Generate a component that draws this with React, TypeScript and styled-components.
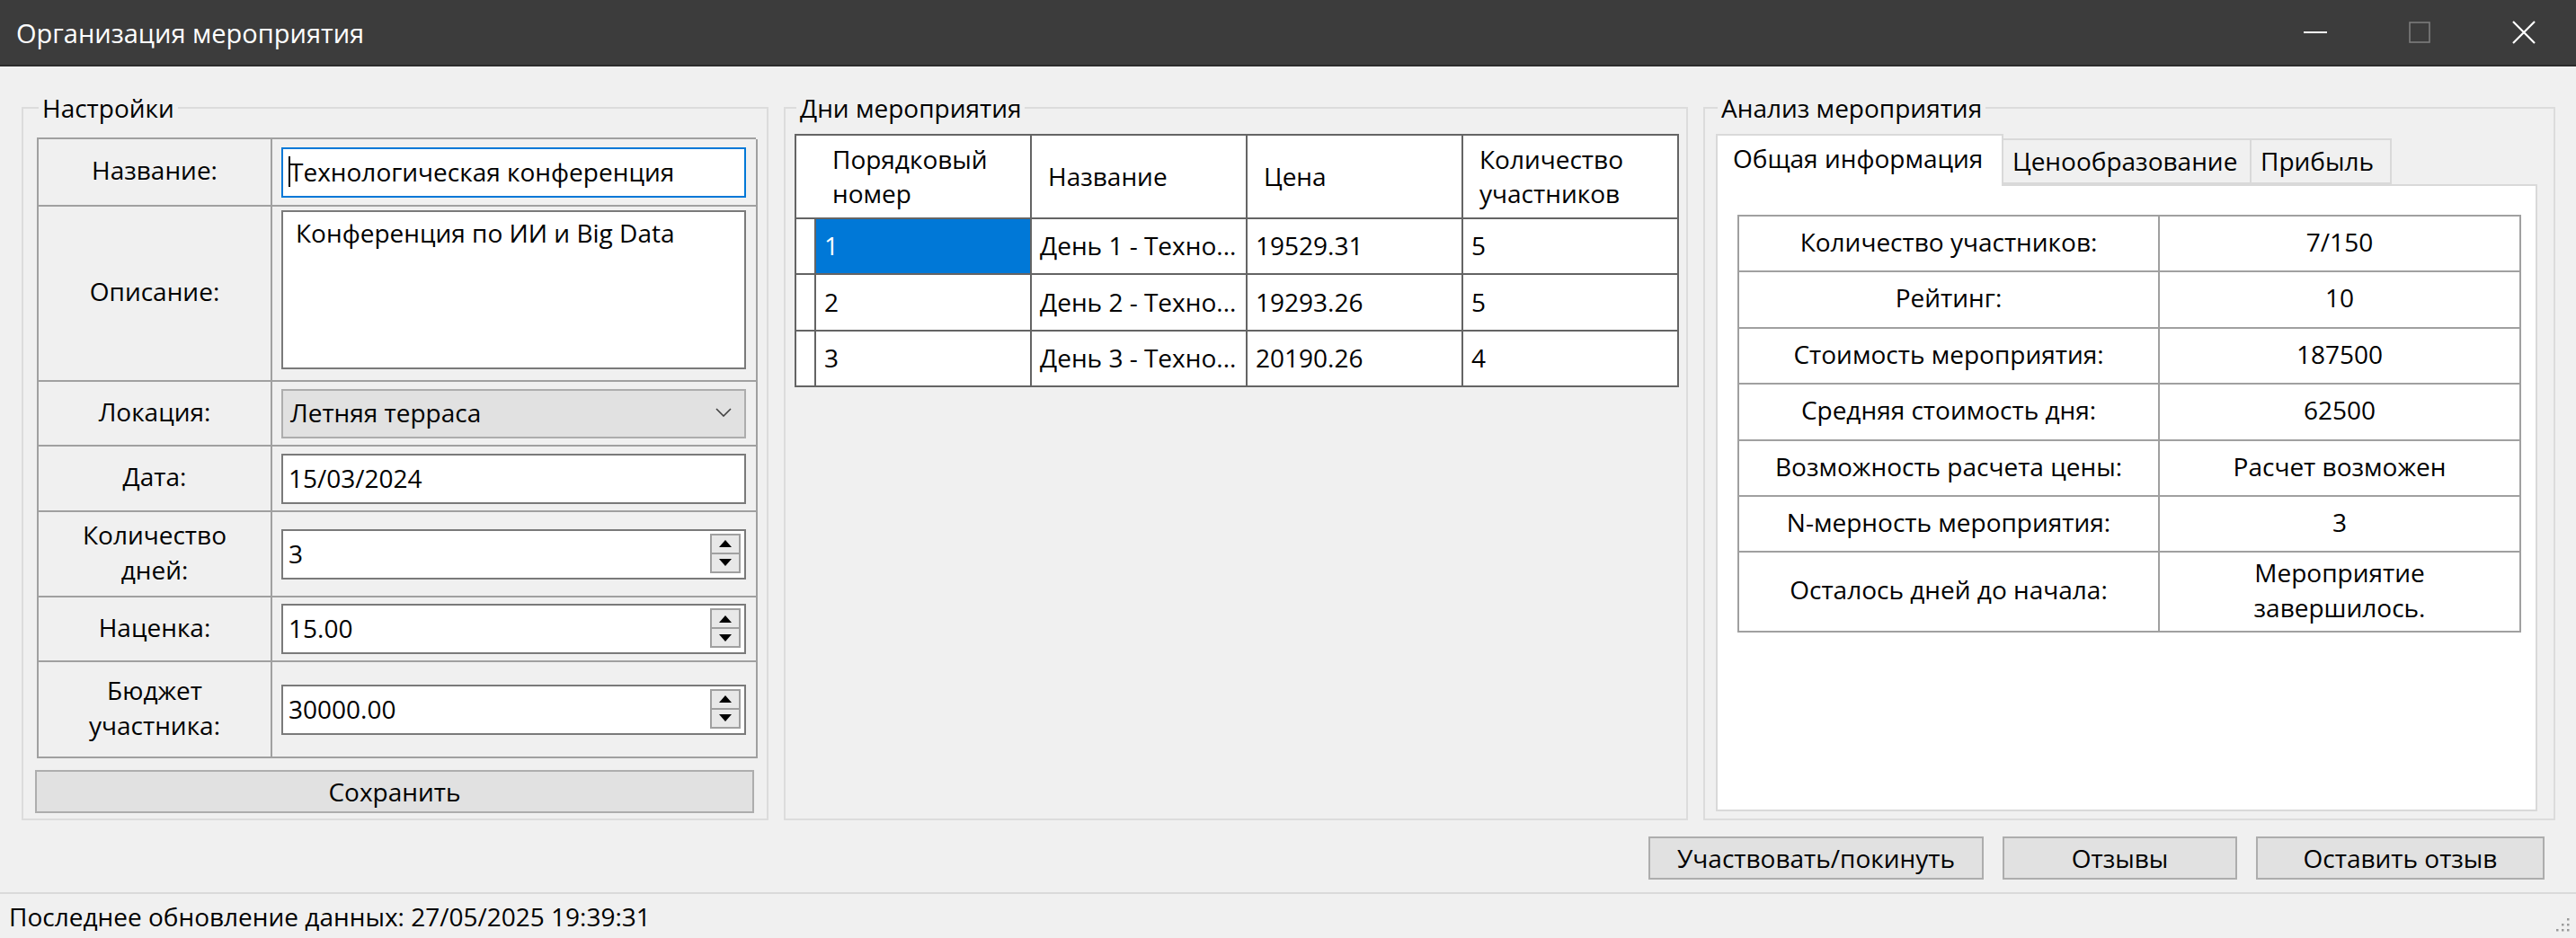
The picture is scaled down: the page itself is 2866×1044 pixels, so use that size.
import React from 'react';
import styled, { createGlobalStyle } from 'styled-components';

const GlobalStyle = createGlobalStyle`
  html, body { margin: 0; padding: 0; }
  body {
    background: #f0f0f0;
    font-family: 'Open Sans', 'Noto Sans', 'Liberation Sans', sans-serif;
    font-size: 28px;
    color: #000;
  }
  * { box-sizing: border-box; }
`;

const Window = styled.div`
	width: 2866px;
	height: 1044px;
	display: flex;
	flex-direction: column;
	background: #f0f0f0;
	overflow: hidden;
`;

const TitleBar = styled.header`
	height: 74px;
	flex: none;
	display: flex;
	align-items: center;
	background: #3c3c3c;
	border-bottom: 2px solid #2b2b2b;
	color: #fff;
	padding-left: 18px;
`;

const TitleText = styled.div`
	flex: 1;
	font-size: 29px;
`;

const WindowControls = styled.div`
	display: flex;
	height: 100%;
`;

const ControlButton = styled.div`
	width: 116px;
	display: flex;
	align-items: center;
	justify-content: center;
`;

const Main = styled.main`
	flex: 1;
	display: flex;
	flex-direction: column;
	padding: 28px 23px 0 24px;
`;

const Groups = styled.div`
	display: flex;
	gap: 17px;
	height: 811px;
`;

const GroupBox = styled.fieldset<{ $width: number; $pad: string }>`
	margin: 0;
	min-width: 0;
	width: ${(p) => p.$width}px;
	height: 100%;
	border: 2px solid #dcdcdc;
	padding: ${(p) => p.$pad};
	display: flex;
	flex-direction: column;
`;

const Legend = styled.legend`
	padding: 0 4px;
	margin-left: 2px;
	line-height: 36px;
`;

/* ---------- settings ---------- */

const FormGrid = styled.div`
	display: grid;
	width: 800px;
	grid-template-columns: 260px 540px;
	grid-template-rows: 75px 195px 72px 73px 95px 72px 107px;
	border-top: 2px solid #a0a0a0;
	border-left: 2px solid #a0a0a0;
`;

const LabelCell = styled.div`
	display: flex;
	align-items: center;
	justify-content: center;
	text-align: center;
	line-height: 1.36;
	padding-bottom: 4px;
	border-right: 2px solid #a0a0a0;
	border-bottom: 2px solid #a0a0a0;
`;

const ValueCell = styled.div<{ $top?: boolean }>`
	display: flex;
	align-items: ${(p) => (p.$top ? 'flex-start' : 'center')};
	padding: ${(p) => (p.$top ? '4px' : '0')} 11px 0 10px;
	border-right: 2px solid #a0a0a0;
	border-bottom: 2px solid #a0a0a0;
`;

const TextBox = styled.div<{ $focused?: boolean }>`
	flex: 1;
	height: 56px;
	display: flex;
	align-items: center;
	padding: 0 0 2px 6px;
	background: #fff;
	border: 2px solid ${(p) => (p.$focused ? '#0078d7' : '#7a7a7a')};
	white-space: nowrap;
`;

const Caret = styled.span`
	width: 2px;
	height: 34px;
	background: #000;
	margin-right: -1px;
`;

const TextArea = styled.div`
	flex: 1;
	height: 177px;
	padding: 5px 14px;
	background: #fff;
	border: 2px solid #7a7a7a;
	line-height: 1.35;
`;

const ComboBox = styled.div`
	flex: 1;
	height: 55px;
	display: flex;
	align-items: center;
	justify-content: space-between;
	padding: 0 14px 2px 8px;
	background: #e1e1e1;
	border: 2px solid #adadad;
`;

const Spinner = styled.div`
	margin-left: auto;
	margin-right: 4px;
	width: 34px;
	height: 44px;
	display: flex;
	flex-direction: column;
	border: 2px solid #a0a0a0;
	background: #e8e8e8;
`;

const SpinHalf = styled.div<{ $top?: boolean }>`
	flex: 1;
	display: flex;
	align-items: center;
	justify-content: center;
	border-bottom: ${(p) => (p.$top ? '2px solid #a0a0a0' : 'none')};
`;

const PushButton = styled.div<{ $width: number }>`
	width: ${(p) => p.$width}px;
	height: 48px;
	display: flex;
	align-items: center;
	justify-content: center;
	background: #e1e1e1;
	border: 2px solid #adadad;
`;

const SaveRow = styled.div`
	margin-top: 13px;
	margin-left: -2px;
`;

/* ---------- days grid ---------- */

const DaysGrid = styled.div`
	display: grid;
	width: fit-content;
	grid-template-columns: 22px repeat(4, 240px);
	grid-template-rows: 93px 62px 63px 62px;
	border-top: 2px solid #646464;
	border-left: 2px solid #646464;
	background: #fff;
`;

const GridCell = styled.div<{ $head?: boolean; $selected?: boolean }>`
	display: flex;
	align-items: center;
	padding: 0 6px 0 ${(p) => (p.$head ? 18 : 9)}px;
	line-height: 1.34;
	overflow: hidden;
	white-space: ${(p) => (p.$head ? 'normal' : 'nowrap')};
	background: ${(p) => (p.$selected ? '#0078d7' : '#fff')};
	color: ${(p) => (p.$selected ? '#fff' : '#000')};
	border-right: 2px solid #646464;
	border-bottom: 2px solid #646464;
`;

/* ---------- analysis ---------- */

const TabStrip = styled.div`
	display: flex;
	align-items: flex-end;
	height: 56px;
`;

const Tab = styled.div<{ $width: number; $active?: boolean }>`
	width: ${(p) => p.$width}px;
	height: ${(p) => (p.$active ? 58 : 51)}px;
	margin-bottom: ${(p) => (p.$active ? -2 : 0)}px;
	display: flex;
	align-items: center;
	padding-left: ${(p) => (p.$active ? 17 : 10)}px;
	padding-bottom: ${(p) => (p.$active ? 6 : 2)}px;
	white-space: nowrap;
	background: ${(p) => (p.$active ? '#fff' : '#f0f0f0')};
	border: 2px solid #d9d9d9;
	border-bottom: ${(p) => (p.$active ? 'none' : '2px solid #d9d9d9')};
	border-left: ${(p) => (p.$active ? '2px solid #d9d9d9' : 'none')};
	position: relative;
	z-index: ${(p) => (p.$active ? 1 : 0)};
`;

const TabPage = styled.div`
	width: 914px;
	height: 698px;
	background: #fff;
	border: 2px solid #d9d9d9;
	padding: 32px 0 0 22px;
`;

const InfoTable = styled.div`
	display: grid;
	width: 872px;
	grid-template-columns: 468px 402px;
	grid-template-rows: 62px 63px 62px 63px 62px 62px 89px;
	border-top: 2px solid #a0a0a0;
	border-left: 2px solid #a0a0a0;
`;

const InfoCell = styled.div`
	display: flex;
	align-items: center;
	justify-content: center;
	text-align: center;
	line-height: 1.36;
	padding-bottom: 4px;
	border-right: 2px solid #a0a0a0;
	border-bottom: 2px solid #a0a0a0;
`;

/* ---------- bottom ---------- */

const ActionBar = styled.div`
	display: flex;
	justify-content: flex-end;
	gap: 21px;
	margin-top: 18px;
	padding-right: 12px;
`;

const StatusBar = styled.footer`
	height: 51px;
	flex: none;
	display: flex;
	align-items: center;
	justify-content: space-between;
	padding-left: 10px;
	border-top: 2px solid #dadada;
`;

const Grip = styled.svg`
	align-self: flex-end;
	margin: 0 6px 6px 0;
`;

const Chevron = () => (
	<svg width="18" height="10" viewBox="0 0 18 10">
		<polyline points="1,1 9,9 17,1" fill="none" stroke="#404040" strokeWidth="1.6" />
	</svg>
);

const Spin = () => (
	<Spinner>
		<SpinHalf $top>
			<svg width="14" height="8" viewBox="0 0 14 8">
				<polygon points="7,0 14,8 0,8" fill="#000" />
			</svg>
		</SpinHalf>
		<SpinHalf>
			<svg width="14" height="8" viewBox="0 0 14 8">
				<polygon points="0,0 14,0 7,8" fill="#000" />
			</svg>
		</SpinHalf>
	</Spinner>
);

const days = [
	{ n: '1', name: 'День 1 - Техно...', price: '19529.31', count: '5' },
	{ n: '2', name: 'День 2 - Техно...', price: '19293.26', count: '5' },
	{ n: '3', name: 'День 3 - Техно...', price: '20190.26', count: '4' }
];

const info: [string, React.ReactNode][] = [
	['Количество участников:', '7/150'],
	['Рейтинг:', '10'],
	['Стоимость мероприятия:', '187500'],
	['Средняя стоимость дня:', '62500'],
	['Возможность расчета цены:', 'Расчет возможен'],
	['N-мерность мероприятия:', '3'],
	[
		'Осталось дней до начала:',
		<>
			Мероприятие
			<br />
			завершилось.
		</>
	]
];

const tabs = [
	{ label: 'Общая информация', width: 320 },
	{ label: 'Ценообразование', width: 276 },
	{ label: 'Прибыль', width: 156 }
];

export default function App() {
	return (
		<>
			<GlobalStyle />
			<Window>
				<TitleBar>
					<TitleText>Организация мероприятия</TitleText>
					<WindowControls>
						<ControlButton>
							<svg width="26" height="4" viewBox="0 0 26 4">
								<line x1="0" y1="2" x2="26" y2="2" stroke="#fff" strokeWidth="2" />
							</svg>
						</ControlButton>
						<ControlButton>
							<svg width="24" height="24" viewBox="0 0 24 24">
								<rect x="1" y="1" width="22" height="22" fill="none" stroke="#7c7c7c" strokeWidth="1.6" />
							</svg>
						</ControlButton>
						<ControlButton>
							<svg width="26" height="26" viewBox="0 0 26 26">
								<path d="M1 1 L25 25 M25 1 L1 25" stroke="#fff" strokeWidth="2.2" />
							</svg>
						</ControlButton>
					</WindowControls>
				</TitleBar>

				<Main>
					<Groups>
						<GroupBox $width={831} $pad="15px 14px 0 15px">
							<Legend>Настройки</Legend>
							<FormGrid>
								<LabelCell>Название:</LabelCell>
								<ValueCell>
									<TextBox $focused>
										<Caret />
										Технологическая конференция
									</TextBox>
								</ValueCell>
								<LabelCell>Описание:</LabelCell>
								<ValueCell $top>
									<TextArea>Конференция по ИИ и Big Data</TextArea>
								</ValueCell>
								<LabelCell>Локация:</LabelCell>
								<ValueCell>
									<ComboBox>
										Летняя терраса
										<Chevron />
									</ComboBox>
								</ValueCell>
								<LabelCell>Дата:</LabelCell>
								<ValueCell>
									<TextBox>15/03/2024</TextBox>
								</ValueCell>
								<LabelCell>
									Количество
									<br />
									дней:
								</LabelCell>
								<ValueCell>
									<TextBox>
										3
										<Spin />
									</TextBox>
								</ValueCell>
								<LabelCell>Наценка:</LabelCell>
								<ValueCell>
									<TextBox>
										15.00
										<Spin />
									</TextBox>
								</ValueCell>
								<LabelCell>
									Бюджет
									<br />
									участника:
								</LabelCell>
								<ValueCell>
									<TextBox>
										30000.00
										<Spin />
									</TextBox>
								</ValueCell>
							</FormGrid>
							<SaveRow>
								<PushButton $width={800}>Сохранить</PushButton>
							</SaveRow>
						</GroupBox>

						<GroupBox $width={1006} $pad="11px 9px 0 10px">
							<Legend>Дни мероприятия</Legend>
							<DaysGrid>
								<GridCell $head />
								<GridCell $head>Порядковый номер</GridCell>
								<GridCell $head>Название</GridCell>
								<GridCell $head>Цена</GridCell>
								<GridCell $head>Количество участников</GridCell>
								{days.map((d, i) => (
									<React.Fragment key={d.n}>
										<GridCell />
										<GridCell $selected={i === 0}>{d.n}</GridCell>
										<GridCell>{d.name}</GridCell>
										<GridCell>{d.price}</GridCell>
										<GridCell>{d.count}</GridCell>
									</React.Fragment>
								))}
							</DaysGrid>
						</GroupBox>

						<GroupBox $width={948} $pad="11px 18px 0 12px">
							<Legend>Анализ мероприятия</Legend>
							<TabStrip>
								{tabs.map((t, i) => (
									<Tab key={t.label} $width={t.width} $active={i === 0}>
										{t.label}
									</Tab>
								))}
							</TabStrip>
							<TabPage>
								<InfoTable>
									{info.map(([k, v]) => (
										<React.Fragment key={k}>
											<InfoCell>{k}</InfoCell>
											<InfoCell>{v}</InfoCell>
										</React.Fragment>
									))}
								</InfoTable>
							</TabPage>
						</GroupBox>
					</Groups>

					<ActionBar>
						<PushButton $width={373}>Участвовать/покинуть</PushButton>
						<PushButton $width={261}>Отзывы</PushButton>
						<PushButton $width={321}>Оставить отзыв</PushButton>
					</ActionBar>
				</Main>

				<StatusBar>
					<span>Последнее обновление данных: 27/05/2025 19:39:31</span>
					<Grip width="20" height="20" viewBox="0 0 20 20">
						{[
							[16, 4],
							[10, 10],
							[16, 10],
							[4, 16],
							[10, 16],
							[16, 16]
						].map(([x, y]) => (
							<rect key={`${x}-${y}`} x={x} y={y} width="2.5" height="2.5" fill="#9a9a9a" />
						))}
					</Grip>
				</StatusBar>
			</Window>
		</>
	);
}
